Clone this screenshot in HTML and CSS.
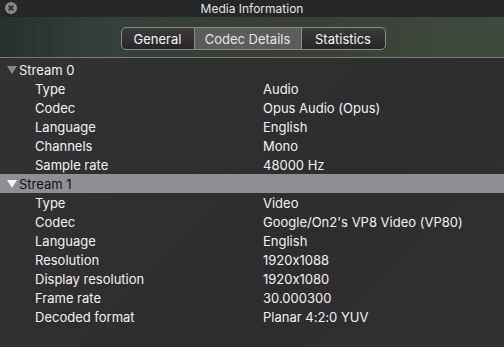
FILE: index.html
```html
<!DOCTYPE html>
<html lang="en">
<head>
    <meta charset="UTF-8">
    <meta name="viewport" content="width=device-width, initial-scale=1.0">
    <title>Media Information</title>
    <link rel="stylesheet" href="styles.css">
</head>
<body>
    <div class="window">
        <div class="titlebar">
            <span class="close-btn">
                <svg width="12" height="12" viewBox="0 0 12 12">
                    <circle cx="6" cy="6" r="6" fill="#8a8a8a"/>
                    <path d="M3.6 3.6 L8.4 8.4 M8.4 3.6 L3.6 8.4" stroke="#2a2a2a" stroke-width="1.6"/>
                </svg>
            </span>
            <span class="title">Media Information</span>
        </div>
        <div class="toolbar">
            <div class="segmented">
                <span class="seg seg-general">General</span>
                <span class="seg seg-codec active">Codec Details</span>
                <span class="seg seg-stats">Statistics</span>
            </div>
        </div>

        <div class="content">
            <div class="stream-row">
                <span class="arrow dim"></span>Stream 0
            </div>
            <div class="row"><span class="label">Type</span><span class="value">Audio</span></div>
            <div class="row"><span class="label">Codec</span><span class="value">Opus Audio (Opus)</span></div>
            <div class="row"><span class="label">Language</span><span class="value">English</span></div>
            <div class="row"><span class="label">Channels</span><span class="value">Mono</span></div>
            <div class="row"><span class="label">Sample rate</span><span class="value">48000 Hz</span></div>

            <div class="stream-row selected">
                <span class="arrow"></span>Stream 1
            </div>
            <div class="row"><span class="label">Type</span><span class="value">Video</span></div>
            <div class="row"><span class="label">Codec</span><span class="value">Google/On2's VP8 Video (VP80)</span></div>
            <div class="row"><span class="label">Language</span><span class="value">English</span></div>
            <div class="row"><span class="label">Resolution</span><span class="value">1920x1088</span></div>
            <div class="row"><span class="label">Display resolution</span><span class="value">1920x1080</span></div>
            <div class="row"><span class="label">Frame rate</span><span class="value">30.000300</span></div>
            <div class="row"><span class="label">Decoded format</span><span class="value">Planar 4:2:0 YUV</span></div>
        </div>
    </div>
</body>
</html>
```

FILE: styles.css
```css
html,
body {
    margin: 0px;
    padding: 0px;
    width: 504px;
    height: 347px;
    overflow: hidden;
    background-color: #2e2e2e;
}

.window {
    width: 504px;
    height: 347px;
    font-family: "Inter", "Liberation Sans", sans-serif;
    font-feature-settings: "calt" 0;
    font-size: 13px;
    color: #f2f2f2;
    display: flex;
    flex-direction: column;
}

.titlebar {
    height: 17px;
    display: flex;
    align-items: center;
    justify-content: center;
    position: relative;
    background-color: #262727;
}

.close-btn {
    position: absolute;
    left: 5px;
    top: 2px;
    width: 12px;
    height: 12px;
    display: flex;
}

.title {
    font-size: 12px;
    color: #e4e4e4;
}

.toolbar {
    height: 37px;
    padding-top: 3px;
    padding-left: 2px;
    display: flex;
    justify-content: center;
    align-items: center;
    background: linear-gradient(90deg, #27302c 0%, #33403a 20%, #3a3e34 55%, #3e4a3e 100%);
    border-bottom: 1px solid #7a7c78;
}

.segmented {
    display: flex;
    height: 21px;
    border: 1px solid #8a8c8a;
    border-radius: 5px;
    overflow: hidden;
    background: linear-gradient(#3c3c3c, #262626);
}

.seg {
    display: flex;
    align-items: center;
    justify-content: center;
    font-size: 13px;
    color: #f4f4f4;
}

.seg-general {
    width: 72px;
    border-right: 1px solid #8a8c8a;
}

.seg-codec {
    width: 106px;
    border-right: 1px solid #8a8c8a;
}

.seg-stats {
    width: 83px;
}

.seg.active {
    background: #5b5d5c;
    color: #e6e6e6;
}

.content {
    flex: 1;
    padding-top: 2px;
    background: linear-gradient(135deg, #333232 0%, #2d2d2d 60%, #303030 100%);
}

.stream-row {
    height: 19px;
    display: flex;
    align-items: center;
    padding-left: 7px;
}

.stream-row.selected {
    background-color: #8e8f93;
    color: #111111;
}

.arrow {
    width: 0px;
    height: 0px;
    border-left: 5px solid transparent;
    border-right: 5px solid transparent;
    border-top: 8px solid #f2f2f2;
    margin-right: 2px;
}

.arrow.dim {
    border-top-color: #8a8a8a;
}

.row {
    height: 19px;
    display: flex;
    align-items: center;
}

.label {
    width: 228px;
    padding-left: 35px;
}

.value {
    flex: 1;
}
```
